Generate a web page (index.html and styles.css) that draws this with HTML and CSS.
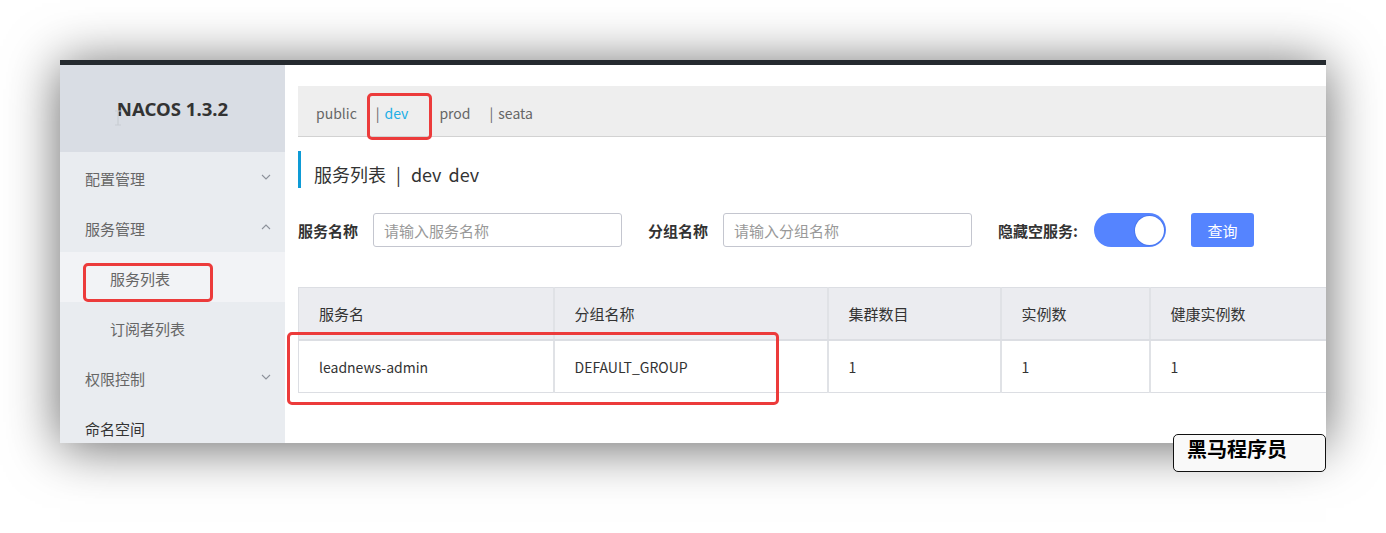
FILE: index.html
```html
<!DOCTYPE html>
<html lang="zh-CN">
<head>
<meta charset="utf-8">
<title>Nacos 服务列表</title>
<link rel="stylesheet" href="styles.css">
</head>
<body>
<div class="stage">
  <div class="window">
    <div class="topbar"></div>
    <div class="win-body">
      <aside class="sidebar">
        <div class="side-head">NACOS 1.3.2</div>
        <nav class="menu">
          <div class="menu-item"><span>配置管理</span><svg class="chev" width="10" height="6" viewBox="0 0 10 6"><path d="M1 1 L5 5 L9 1" fill="none" stroke="#8d929b" stroke-width="1.1"/></svg></div>
          <div class="menu-item"><span>服务管理</span><svg class="chev" width="10" height="6" viewBox="0 0 10 6"><path d="M1 5 L5 1 L9 5" fill="none" stroke="#8d929b" stroke-width="1.1"/></svg></div>
          <div class="menu-item sub active"><span>服务列表</span></div>
          <div class="menu-item sub"><span>订阅者列表</span></div>
          <div class="menu-item"><span>权限控制</span><svg class="chev" width="10" height="6" viewBox="0 0 10 6"><path d="M1 1 L5 5 L9 1" fill="none" stroke="#8d929b" stroke-width="1.1"/></svg></div>
          <div class="menu-item dark"><span>命名空间</span></div>
        </nav>
      </aside>
      <main class="main">
        <div class="tabs">
          <span class="tab">public</span>
          <span class="tab tab-dev"><span class="bar">|</span><span class="cur">dev</span></span>
          <span class="tab">prod</span>
          <span class="tab"><span class="bar">|</span>seata</span>
        </div>
        <div class="title">
          <span>服务列表</span><span class="sep">|</span><span class="ns">dev</span><span>dev</span>
        </div>
        <div class="form">
          <span class="label">服务名称</span>
          <input class="input" type="text" placeholder="请输入服务名称">
          <span class="label">分组名称</span>
          <input class="input" type="text" placeholder="请输入分组名称">
          <span class="label">隐藏空服务:</span>
          <span class="switch"><span class="knob"></span></span>
          <button class="btn">查询</button>
        </div>
        <table class="grid">
          <colgroup>
            <col class="c1"><col class="c2"><col class="c3"><col class="c4"><col>
          </colgroup>
          <thead>
            <tr><th>服务名</th><th>分组名称</th><th>集群数目</th><th>实例数</th><th>健康实例数</th></tr>
          </thead>
          <tbody>
            <tr><td>leadnews-admin</td><td>DEFAULT_GROUP</td><td>1</td><td>1</td><td>1</td></tr>
          </tbody>
        </table>
      </main>
    </div>
  </div>
</div>

<svg class="ibeam" width="8" height="16" viewBox="0 0 8 16"><path d="M1 1 H7 M4 1 V15 M1 15 H7" fill="none" stroke="#c9cdd3" stroke-width="1.2"/></svg>
<div class="mark mark-tab"></div>
<div class="mark mark-side"></div>
<div class="mark mark-row"></div>
<div class="badge">黑马程序员</div>
</body>
</html>
```
FILE: styles.css
```css
html, body {
  margin: 0;
  padding: 0;
}
body {
  width: 1386px;
  height: 533px;
  overflow: hidden;
  background: #ffffff;
  position: relative;
  font-family: "Noto Sans CJK SC", sans-serif;
  font-size: 15px;
  color: #333;
}
.stage {
  padding: 60px 0 0 60px;
}
.window {
  width: 1266px;
  height: 383px;
  background: #fff;
  display: flex;
  flex-direction: column;
  overflow: hidden;
  box-shadow: 0 4px 50px rgba(0, 0, 0, 0.6);
}
.topbar {
  height: 5px;
  flex: none;
  background: #252a2f;
}
.win-body {
  flex: 1;
  display: flex;
  min-height: 0;
}
.sidebar {
  width: 225px;
  flex: none;
  background: #e9ecf0;
}
.side-head {
  height: 87px;
  background: #d9dde4;
  display: flex;
  align-items: center;
  justify-content: center;
  font-family: "Noto Sans", sans-serif;
  font-weight: 700;
  font-size: 18.6px;
  color: #333;
}
.menu-item {
  height: 50px;
  display: flex;
  align-items: center;
  justify-content: space-between;
  padding: 0 14px 0 25px;
  color: #666;
  line-height: 20px;
}
.menu-item span {
  padding-top: 3px;
}
.menu-item.sub {
  padding-left: 50px;
}
.menu-item.active {
  background: #f2f3f6;
}
.menu-item.dark {
  color: #333;
}
.chev {
  display: block;
}
.main {
  flex: 1;
  min-width: 0;
  padding: 21px 0 0 13px;
  overflow: hidden;
}
.tabs {
  border-bottom: 1px solid #d2d2d2;
  background: #eeeeee;
  display: flex;
  align-items: center;
  padding: 4px 0 0 18px;
  height: 46px;
  color: #666;
  font-size: 14px;
  gap: 19px;
}
.tab-dev {
  padding-right: 12px;
}
.bar {
  margin-right: 5px;
}
.cur {
  color: #22aee6;
}
.title {
  margin-top: 14px;
  height: 37px;
  box-sizing: border-box;
  border-left: 3px solid #0e9bd6;
  padding: 10px 0 0 13px;
  line-height: 27px;
  font-size: 18px;
  color: #333;
  display: flex;
}
.title .sep {
  margin: 0 10px;
}
.title .ns {
  margin-right: 7px;
}
.form {
  margin-top: 25px;
  height: 34px;
  display: flex;
  align-items: center;
}
.label {
  font-weight: 700;
  color: #333;
  margin-right: 15px;
}
.input {
  width: 249px;
  height: 34px;
  box-sizing: border-box;
  border: 1px solid #c4c6cf;
  border-radius: 3px;
  padding: 0 10px;
  margin: 0 26px 0 0;
  font-family: "Noto Sans CJK SC", sans-serif;
  font-size: 15px;
  color: #333;
  outline: none;
}
.input::placeholder {
  color: #999;
}
.switch {
  width: 72px;
  height: 34px;
  box-sizing: border-box;
  border-radius: 17px;
  background: #5584ff;
  display: flex;
  align-items: center;
  justify-content: flex-end;
  padding-right: 2px;
  margin-left: 1px;
}
.knob {
  width: 29px;
  height: 29px;
  border-radius: 50%;
  background: #fff;
  box-shadow: 0 0 0 1px #4a78f0;
}
.btn {
  width: 63px;
  height: 34px;
  margin-left: 25px;
  border: 0;
  border-radius: 3px;
  background: #5584ff;
  color: #fff;
  font-family: "Noto Sans CJK SC", sans-serif;
  font-size: 15px;
  padding: 0;
}
.grid {
  margin-top: 40px;
  width: 1110px;
  table-layout: fixed;
  border-collapse: collapse;
  border: 1px solid #dcdee3;
}
.c1 { width: 255px; }
.c2 { width: 274px; }
.c3 { width: 173px; }
.c4 { width: 149px; }
.grid th,
.grid td {
  text-align: left;
  font-weight: 400;
  padding: 0 0 0 20px;
  color: #333;
  border-right: 2px solid #e0e2e6;
}
.grid th {
  height: 51px;
  background: #ebecf0;
  border-bottom: 2px solid #dcdee3;
}
.grid td {
  height: 51px;
  background: #fff;
  font-size: 14px;
}
.ibeam {
  position: absolute;
  left: 114px;
  top: 110px;
}
.mark {
  position: absolute;
  box-sizing: border-box;
  border: 3px solid #ec3b3b;
  border-radius: 5px;
}
.mark-tab {
  left: 367px;
  top: 93px;
  width: 65px;
  height: 47px;
}
.mark-side {
  left: 83px;
  top: 263px;
  width: 130px;
  height: 39px;
}
.mark-row {
  left: 287px;
  top: 332px;
  width: 492px;
  height: 73px;
}
.badge {
  position: absolute;
  left: 1173px;
  top: 434px;
  width: 153px;
  height: 38px;
  box-sizing: border-box;
  border: 1px solid #111;
  border-radius: 5px;
  background: #f9f9f9;
  padding-left: 13px;
  font-weight: 700;
  font-size: 20px;
  line-height: 27px;
  color: #000;
}
```
